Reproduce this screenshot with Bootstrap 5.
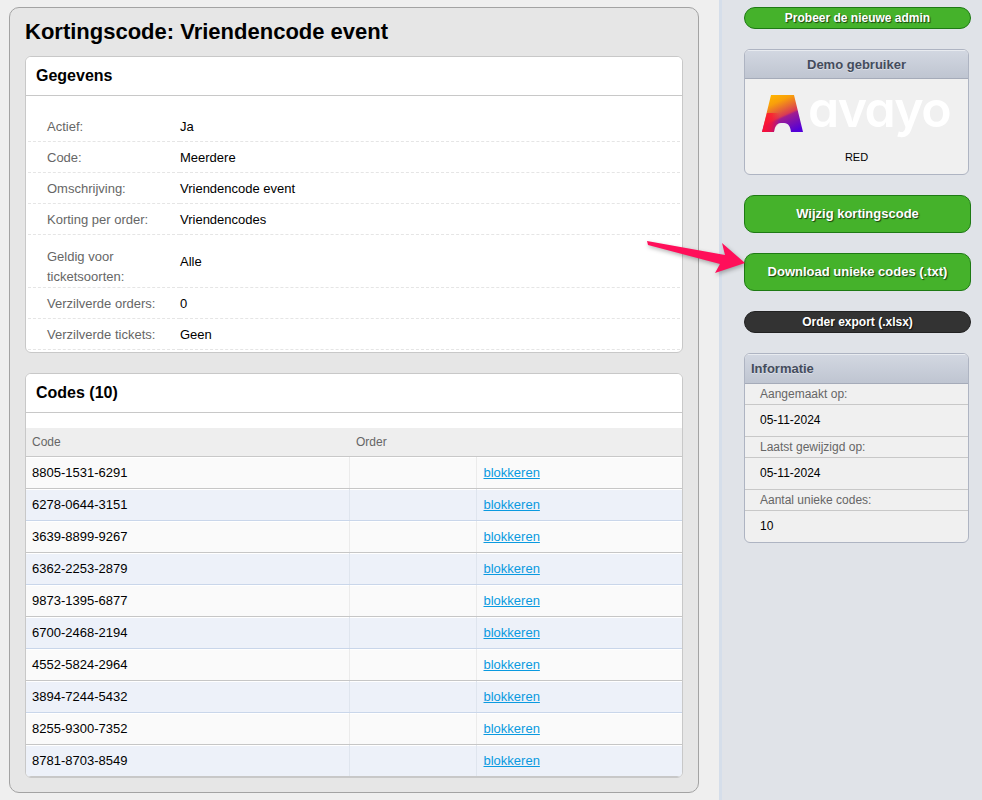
<!DOCTYPE html>
<html lang="nl">
<head>
<meta charset="utf-8">
<title>Kortingscode</title>
<link href="https://cdn.jsdelivr.net/npm/bootstrap@5.3.0/dist/css/bootstrap.min.css" rel="stylesheet">
<style>
html,body{height:800px;overflow:hidden}
body{background:#efefef;font-family:"Liberation Sans",Arial,sans-serif;font-size:12px;color:#000;position:relative}
.page-shell{height:800px}
.main-col{width:719px;padding:7px 20px 0 9px;flex:none}
.main-panel{height:786px;background:#e6e6e6;border:1px solid #a3a3a3;border-radius:10px;padding:0 15px}
.main-panel h1{font-size:22px;font-weight:700;line-height:26px;margin:11px 0 11px;color:#000}
.side-col{width:263px;flex:none;background:#e0e3e8;border-left:3px solid #d5deea;padding:7px 11px 0 22px}
.data-card{border:1px solid #c8c8c8;border-radius:6px;overflow:hidden;background:#fff;--bs-card-bg:#fff}
.data-card .card-header{background:#fff;border-bottom:1px solid #c8c8c8;border-radius:0;height:39px;padding:0 10px;font-size:16px;font-weight:700;line-height:37px}
.detail-table{margin:14px 2px 2px;width:652px}
.detail-table td{font-size:13px;padding:3px 0 0;height:31px;border-bottom:1px dashed #e5e5e5;vertical-align:middle;line-height:20px}
.detail-table .lbl{color:#666;width:152px;padding-left:19px}
.detail-table .two-line td{height:53px}
.detail-table .two-line .lbl{padding-right:20px;padding-top:12px}
.codes-card{margin-top:20px}
.codes-wrap{padding-top:15px}
.codes-table{margin:0;width:100%;table-layout:fixed;--bs-table-bg:transparent;--bs-table-color:#000}
.codes-table th{font-size:12px;font-weight:400;color:#666;background:#eee;height:29px;padding:0 6px;border-bottom:1px solid #c8c8c8;border-top:0;vertical-align:middle}
.codes-table th:nth-child(2){padding-left:7px}
.codes-table td{font-size:13px;height:32px;padding:0 6px;vertical-align:middle;background:#fafafa;border-bottom:1px solid #c6c6c6;border-right:1px solid #ebebeb;box-shadow:inset 0 1px 0 #fff}
.codes-table tr:nth-child(even) td{background:#edf1f9;border-bottom-color:#c9d6ea;border-right-color:#dfe5ee}
.codes-table tr:last-child td{border-bottom-color:#c8c8c8}
.codes-table td:last-child{border-right:0;padding-left:7px}
.codes-table a{color:#0a9ae0}
.action-btn{display:block;width:227px;color:#fff;font-weight:700;text-align:center;border:1px solid #1e7a14;background:#45b22b;text-shadow:1px 1px 1px rgba(0,0,0,.65);padding:0}
.action-btn:hover{color:#fff;background:#45b22b;border-color:#1e7a14}
.slim-btn{height:22px;border-radius:11px;font-size:12px;line-height:20px}
.big-btn{height:38px;border-radius:10px;font-size:13px;line-height:36px}
.dark-btn{background:#333;border-color:#222}
.dark-btn:hover{background:#333;border-color:#222}
.side-box{width:225px;background:#f0f0f0;border:1px solid #aeb4c2;border-radius:6px;overflow:hidden}
.side-head{height:29px;background:linear-gradient(#d2d7e1,#bfc5d1);border-bottom:1px solid #a5abb9;border-top:1px solid #e8ebf0;color:#444c5c;font-weight:700;font-size:13px;line-height:27px;text-shadow:0 1px 0 rgba(255,255,255,.4)}
.logo-area{height:95px}
.logo-svg{margin-left:17px}
.logo-text{font-family:"Inter",sans-serif;font-size:50px;font-weight:600;fill:#fff;font-feature-settings:"cv11" 1;letter-spacing:-1.5px}
.logo-sub{font-size:11px;line-height:13px;margin-top:2px}
.info-lbl{height:21px;color:#666;font-size:12px;line-height:21px;padding-left:15px;border-bottom:1px solid #c8c8c8}
.info-val{height:32px;font-size:12px;line-height:31px;padding-left:15px;border-bottom:1px solid #c8c8c8}
.info-val:last-child{border-bottom:0;height:31px}
.arrow-over{position:absolute;left:640px;top:235px;filter:drop-shadow(1px 2px 2px rgba(0,0,0,.3))}
</style>
</head>
<body>
<div class="d-flex page-shell">
  <div class="main-col">
    <div class="main-panel">
      <h1>Kortingscode: Vriendencode event</h1>
      <div class="card data-card">
        <div class="card-header">Gegevens</div>
        <table class="detail-table">
          <tr><td class="lbl">Actief:</td><td>Ja</td></tr>
          <tr><td class="lbl">Code:</td><td>Meerdere</td></tr>
          <tr><td class="lbl">Omschrijving:</td><td>Vriendencode event</td></tr>
          <tr><td class="lbl">Korting per order:</td><td>Vriendencodes</td></tr>
          <tr class="two-line"><td class="lbl">Geldig voor ticketsoorten:</td><td>Alle</td></tr>
          <tr><td class="lbl">Verzilverde orders:</td><td>0</td></tr>
          <tr><td class="lbl">Verzilverde tickets:</td><td>Geen</td></tr>
        </table>
      </div>
      <div class="card data-card codes-card">
        <div class="card-header">Codes (10)</div>
        <div class="codes-wrap">
          <table class="table codes-table">
            <colgroup><col style="width:323px"><col style="width:127px"><col></colgroup>
            <thead><tr><th>Code</th><th>Order</th><th></th></tr></thead>
            <tbody>
              <tr><td>8805-1531-6291</td><td></td><td><a href="#">blokkeren</a></td></tr>
              <tr><td>6278-0644-3151</td><td></td><td><a href="#">blokkeren</a></td></tr>
              <tr><td>3639-8899-9267</td><td></td><td><a href="#">blokkeren</a></td></tr>
              <tr><td>6362-2253-2879</td><td></td><td><a href="#">blokkeren</a></td></tr>
              <tr><td>9873-1395-6877</td><td></td><td><a href="#">blokkeren</a></td></tr>
              <tr><td>6700-2468-2194</td><td></td><td><a href="#">blokkeren</a></td></tr>
              <tr><td>4552-5824-2964</td><td></td><td><a href="#">blokkeren</a></td></tr>
              <tr><td>3894-7244-5432</td><td></td><td><a href="#">blokkeren</a></td></tr>
              <tr><td>8255-9300-7352</td><td></td><td><a href="#">blokkeren</a></td></tr>
              <tr><td>8781-8703-8549</td><td></td><td><a href="#">blokkeren</a></td></tr>
            </tbody>
          </table>
        </div>
      </div>
    </div>
  </div>
  <div class="side-col d-flex flex-column">
    <a href="#" class="btn action-btn slim-btn">Probeer de nieuwe admin</a>
    <div class="side-box text-center" style="margin-top:20px">
      <div class="side-head">Demo gebruiker</div>
      <div class="logo-area">
        <svg width="206" height="70" viewBox="0 -16 206 70" class="d-block logo-svg" role="img" aria-label="avayo">
          <defs><linearGradient id="lg" x1="0.25" y1="0" x2="0.75" y2="1"><stop offset="0" stop-color="#ffb400"/><stop offset=".2" stop-color="#f9a00a"/><stop offset=".55" stop-color="#d83a55"/><stop offset=".6" stop-color="#a01e90"/><stop offset="1" stop-color="#5300d8"/></linearGradient>
          <linearGradient id="lg2" x1="0" y1="0" x2="1" y2="0"><stop offset="0" stop-color="#ff1030"/><stop offset=".55" stop-color="#ff1030" stop-opacity=".7"/><stop offset="1" stop-color="#ff1030" stop-opacity="0"/></linearGradient></defs>
          <path d="M9 0H32L41 37H29C28 29 25 28 20.500 28S13 29 12 37H0Z" fill="url(#lg)"/>
          <path d="M5 18H18L16 30Q13 31 12 37H0Z" fill="url(#lg2)"/>
          <text x="46" y="32" class="logo-text">avayo</text>
        </svg>
        <div class="logo-sub">RED</div>
      </div>
    </div>
    <a href="#" class="btn action-btn big-btn" style="margin-top:20px">Wijzig kortingscode</a>
    <a href="#" class="btn action-btn big-btn" style="margin-top:20px">Download unieke codes (.txt)</a>
    <a href="#" class="btn action-btn slim-btn dark-btn" style="margin-top:20px">Order export (.xlsx)</a>
    <div class="side-box" style="margin-top:20px">
      <div class="side-head text-start" style="height:30px;line-height:28px;padding-left:6px">Informatie</div>
      <div class="info-lbl">Aangemaakt op:</div>
      <div class="info-val">05-11-2024</div>
      <div class="info-lbl">Laatst gewijzigd op:</div>
      <div class="info-val">05-11-2024</div>
      <div class="info-lbl">Aantal unieke codes:</div>
      <div class="info-val">10</div>
    </div>
  </div>
</div>
<svg class="arrow-over" width="110" height="45" viewBox="640 235 110 45" aria-hidden="true">
  <path d="M647 241L725 255L722 243L745 263L715 273L720 264L648 245Z" fill="#ff0f5a"/>
</svg>
</body>
</html>
